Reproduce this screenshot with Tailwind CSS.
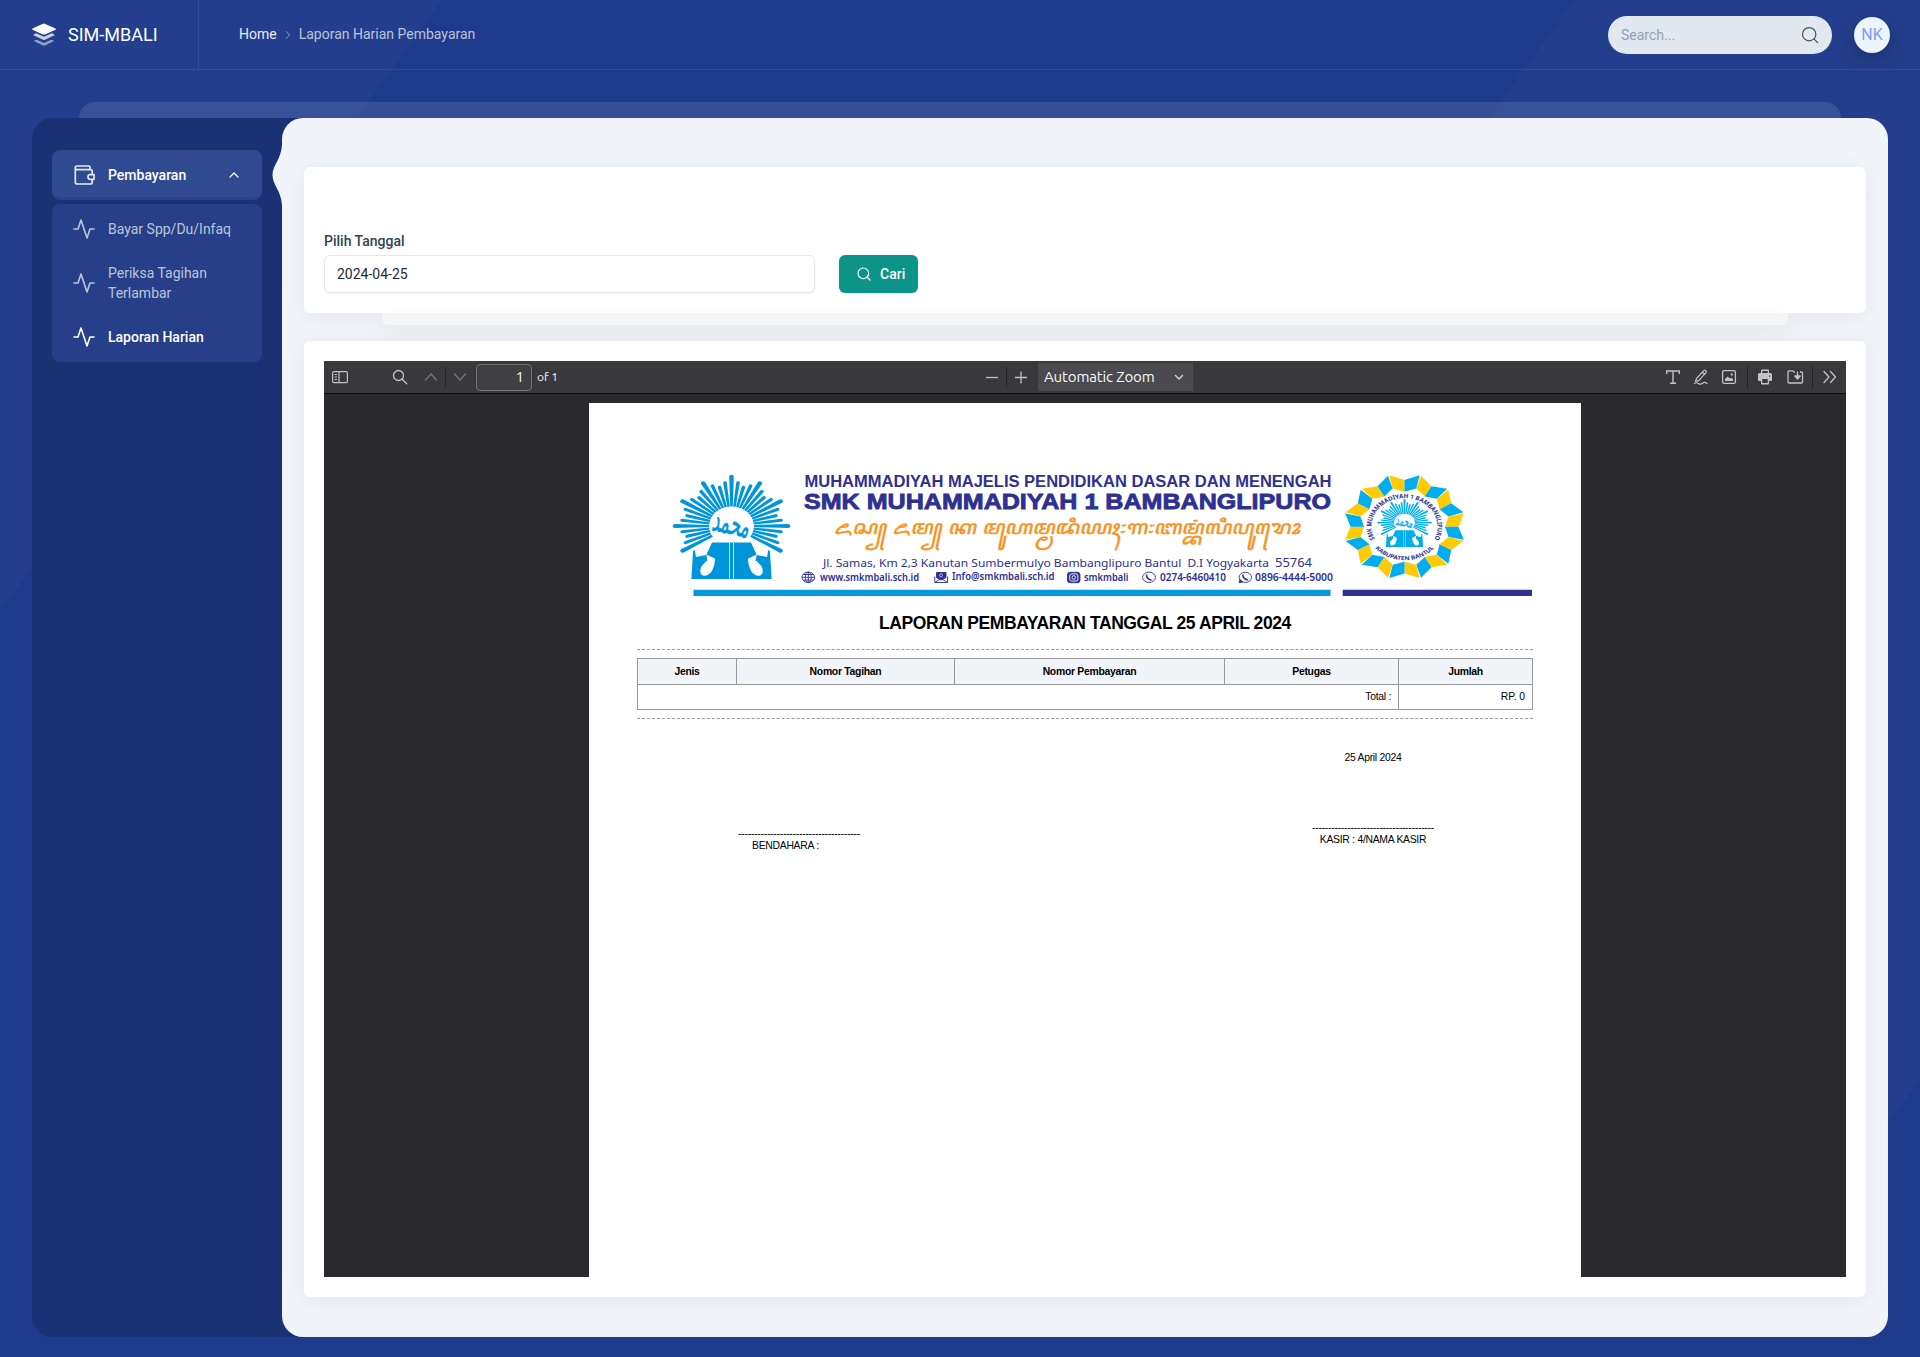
<!DOCTYPE html>
<html lang="id">
<head>
<meta charset="utf-8">
<title>SIM-MBALI</title>
<script src="https://cdn.jsdelivr.net/npm/@tailwindcss/browser@4"></script>
</head>
<body class="relative h-[1357px] w-[1920px] overflow-hidden bg-[#1e3a8a] font-[Roboto,sans-serif] text-sm text-slate-800">
<svg class="absolute inset-0" width="1920" height="1357" aria-hidden="true">
  <path d="M0 0H442L0 612Z" fill="#fff" fill-opacity=".025"/>
  <path d="M1574 0H1920V1080L1870 1148L1400 242Z" fill="#fff" fill-opacity=".025"/>
</svg>

<div class="relative flex h-full flex-col">
  <header class="flex h-[70px] items-center border-b border-white/8 pr-[30px]">
    <div class="flex h-full w-[199px] items-center border-r border-white/8 pl-8">
      <svg width="24" height="24" viewBox="0 0 24 24" fill="#fff">
        <path d="M12 0.5 23.4 5.6Q24.4 6.2 23.4 6.8L13 11.4Q12 11.8 11 11.4L.6 6.8Q-.4 6.2 .6 5.6L11 .8Z"/>
        <path opacity=".75" d="M1.8 11.2 4.3 10.2 11 13.3Q12 13.7 13 13.3L19.7 10.2 22.2 11.2Q23 11.9 22 12.5L13 16.7Q12 17.1 11 16.7L2 12.5Q1 11.9 1.8 11.2Z"/>
        <path opacity=".5" d="M2.6 17.2 4.9 16.7 11 19.6Q12 20 13 19.6L19.1 16.7 21.4 17.2Q22.2 18 21.2 18.6L13 22.6Q12 23 11 22.6L2.8 18.6Q1.8 18 2.6 17.2Z"/>
      </svg>
      <span class="ml-3 text-lg text-white">SIM-MBALI</span>
    </div>
    <nav class="mb-[2px] ml-10 flex items-center text-white/90">
      <span>Home</span>
      <svg class="ml-1 mr-1 mt-[3px]" width="14" height="14" viewBox="0 0 24 24" fill="none" stroke="#fff" stroke-opacity=".6" stroke-width="1.5" stroke-linecap="round" stroke-linejoin="round"><path d="m9 18 6-6-6-6"/></svg>
      <span class="text-white/70">Laporan Harian Pembayaran</span>
    </nav>
    <div class="ml-auto flex h-[38px] w-56 items-center justify-between rounded-full bg-slate-200 pl-[13px] pr-3 text-slate-400">
      <span>Search...</span>
      <svg width="20" height="20" viewBox="0 0 24 24" fill="none" stroke="#475569" stroke-width="1.5" stroke-linecap="round" stroke-linejoin="round"><circle cx="11" cy="11" r="8"/><path d="m21 21-4.3-4.3"/></svg>
    </div>
    <div class="ml-[22px] flex size-9 items-center justify-center rounded-full bg-[#ebf4ff] text-base text-[#7f9cf5] shadow-[0_8px_20px_#00000033]">NK</div>
  </header>

  <div class="mx-[79px] mt-8 h-4 rounded-t-[20px] bg-white/10"></div>

  <main class="mx-8 flex h-[1219px] rounded-[21px] bg-[#1a3174]">
    <aside class="w-[250px] px-5 pt-8">
      <div class="flex h-[50px] items-center overflow-hidden rounded-lg border-b-[3px] border-[#2a4289] bg-[#304a92] pl-5 pr-5 pt-[3px] font-medium text-white">
        <svg width="24" height="24" viewBox="0 0 24 24" fill="none" stroke="#e2e8f0" stroke-width="1.7" stroke-linecap="round" stroke-linejoin="round"><path d="M18 6.500V4.200Q18 3 16.800 3H5Q3.300 3 3.300 4.900T5 6.700H18.500Q20.200 6.700 20.200 8.400V11M3.300 5V19Q3.300 21 5.300 21H18.500Q20.200 21 20.200 19.300V17"/><path d="M22 11.700H18.200Q16 11.700 16 14T18.200 16.300H22Z"/></svg>
        <span class="ml-3">Pembayaran</span>
        <svg class="ml-auto" width="16" height="16" viewBox="0 0 24 24" fill="none" stroke="#fff" stroke-width="1.8" stroke-linecap="round" stroke-linejoin="round"><path d="m18 15-6-6-6 6"/></svg>
      </div>
      <ul class="mt-1 rounded-lg bg-[#263f88] text-white/70">
        <li class="flex h-[50px] items-center pl-5">
          <svg width="24" height="24" viewBox="0 0 24 24" fill="none" stroke="currentColor" stroke-width="1.6" stroke-linecap="round" stroke-linejoin="round"><path d="M22 12h-4l-3 9L9 3l-3 9H2"/></svg>
          <span class="ml-3">Bayar Spp/Du/Infaq</span>
        </li>
        <li class="flex h-[58px] items-center pl-5">
          <svg width="24" height="24" viewBox="0 0 24 24" fill="none" stroke="currentColor" stroke-width="1.6" stroke-linecap="round" stroke-linejoin="round"><path d="M22 12h-4l-3 9L9 3l-3 9H2"/></svg>
          <span class="ml-3">Periksa Tagihan<br>Terlambar</span>
        </li>
        <li class="flex h-[50px] items-center pl-5 font-medium text-white">
          <svg width="24" height="24" viewBox="0 0 24 24" fill="none" stroke="currentColor" stroke-width="1.6" stroke-linecap="round" stroke-linejoin="round"><path d="M22 12h-4l-3 9L9 3l-3 9H2"/></svg>
          <span class="ml-3">Laporan Harian</span>
        </li>
      </ul>
    </aside>

    <section class="relative flex-1 rounded-[21px] bg-slate-100 px-[22px] pt-[49px]">
      <svg class="absolute -left-[10px] top-[27px]" width="11" height="60" viewBox="0 0 11 60" fill="#f1f5f9"><path d="M11 0H10C9 15 .5 20 .5 30S9 45 10 60H11Z"/></svg>

      <div class="relative h-[146px] rounded-md bg-white px-5 pt-16 shadow-[0_3px_22px_#00000010]">
        <div class="absolute left-[78px] right-[78px] top-full h-3 rounded-b-md bg-[#f4f5f6] shadow-[0_6px_20px_#00000010]"></div>
        <label class="block font-medium text-slate-700">Pilih Tanggal</label>
        <div class="mt-1 flex">
          <div class="flex h-[38px] w-[491px] items-center rounded-md border border-slate-200 px-3 shadow-xs">2024-04-25</div>
          <button class="ml-6 flex h-[38px] w-[79px] items-center rounded-md bg-[#0d9488] pl-[17px] font-medium text-white shadow-xs">
            <svg width="16" height="16" viewBox="0 0 24 24" fill="none" stroke="currentColor" stroke-width="1.8" stroke-linecap="round" stroke-linejoin="round"><circle cx="11" cy="11" r="8"/><path d="m21 21-4.3-4.3"/></svg>
            <span class="ml-2">Cari</span>
          </button>
        </div>
      </div>

      <div class="relative mt-7 h-[956px] rounded-md bg-white p-5 shadow-[0_3px_22px_#00000010]">
        <div class="flex h-[916px] flex-col bg-[#2a2a2e]">
          <div class="flex h-[33px] shrink-0 items-center border-b border-[#0c0c0d] bg-[#38383d] font-[Ubuntu,'Noto_Sans',sans-serif] text-[15px] text-[#f9f9fa]">
            <svg class="ml-2" width="16" height="16" viewBox="0 0 16 16" fill="none" stroke="#c3c3c5" stroke-width="1.2"><rect x=".6" y="2.6" width="14.8" height="11" rx="1.2"/><path d="M7 2.6v11M2.5 5.5H5M2.5 8H5M2.5 10.500H5"/></svg>
            <svg class="ml-11" width="16" height="16" viewBox="0 0 16 16" fill="none" stroke="#c3c3c5" stroke-width="1.3" stroke-linecap="round"><circle cx="6.5" cy="6.500" r="5"/><path d="m10.200 10.200 4.500 4.500"/></svg>
            <svg class="ml-[15px]" width="16" height="16" viewBox="0 0 16 16" fill="none" stroke="#76767a" stroke-width="1.3" stroke-linecap="round"><path d="m2.500 11 5.500-6 5.500 6"/></svg>
            <div class="ml-[6px] h-5 w-px bg-[#232327]"></div>
            <svg class="ml-[6px]" width="16" height="16" viewBox="0 0 16 16" fill="none" stroke="#76767a" stroke-width="1.3" stroke-linecap="round"><path d="m2.500 5 5.500 6 5.500-6"/></svg>
            <div class="ml-2 flex h-[27px] w-14 items-center justify-end rounded-sm border border-[#737373] bg-[#404044] pr-[7px]">1</div>
            <span class="ml-[5px] w-6 whitespace-nowrap text-[12px]">of 1</span>
            <svg class="ml-[423px]" width="16" height="16" viewBox="0 0 16 16" stroke="#c3c3c5" stroke-width="1.300"><path d="M2 8.500h12"/></svg>
            <div class="ml-[6px] h-5 w-px bg-[#232327]"></div>
            <svg class="ml-[6px]" width="16" height="16" viewBox="0 0 16 16" stroke="#c3c3c5" stroke-width="1.300"><path d="M2 8.500h12M8 2.500v12"/></svg>
            <div class="ml-[9px] flex h-7 w-[155px] items-center justify-between bg-[#4a4a4f] pl-[6px] pr-[7px] tracking-[-0.14px]">
              <span class="whitespace-nowrap">Automatic Zoom</span>
              <svg width="14" height="14" viewBox="0 0 14 14" fill="none" stroke="#dcdcde" stroke-width="1.300" stroke-linecap="round"><path d="m3.500 5.500 3.500 3.500 3.500-3.500"/></svg>
            </div>
            <div class="ml-auto flex items-center">
              <svg width="16" height="16" viewBox="0 0 16 16" fill="none" stroke="#c3c3c5" stroke-width="1.400"><path d="M1.700 5V2h12.600v3M8 2v12.300M5 14.300h6"/></svg>
              <svg class="ml-3" width="16" height="16" viewBox="0 0 16 16" fill="none" stroke="#c3c3c5" stroke-width="1.200" stroke-linejoin="round" stroke-linecap="round"><path d="M3.500 9.500 10.800 1.600q1-.8 2 .1t.2 2L5.700 11.700 2.500 12.500zM9.500 3.200l2.200 2.100M1.500 14.500q2-1.500 4 0t4-.2 4.500.1"/></svg>
              <svg class="ml-3" width="16" height="16" viewBox="0 0 16 16" fill="#c3c3c5"><rect x="1.600" y="1.600" width="12.800" height="12.800" rx="1.500" fill="none" stroke="#c3c3c5" stroke-width="1.300"/><path d="M4 12V10l2.500-2.500L9 9.500l1.200-.9L12 10.300V12zM9.800 4.500h2v2h-2z"/></svg>
              <div class="ml-[10px] h-[22px] w-px bg-[#232327]"></div>
              <svg class="ml-[9px]" width="16" height="16" viewBox="0 0 16 16" fill="#c3c3c5"><path fill-rule="evenodd" d="M4 1.500Q4 .500 5 .500h6q1 0 1 1V4h1.500q1.500 0 1.500 1.500V11q0 1-1 1h-2v2.500q0 1-1 1H5q-1 0-1-1V12H2q-1 0-1-1V5.500Q1 4 2.500 4H4zM5.300 2v2h5.400V2zM5.300 10v4h5.400v-4zM12 6.500v1.200h1.200V6.500z"/></svg>
              <svg class="ml-[14px]" width="17" height="16" viewBox="0 0 17 16" fill="none" stroke="#c3c3c5" stroke-width="1.300" stroke-linejoin="round"><path d="M8 3H7L5.500 1.800H2q-1 0-1 1V13q0 1 1 1h12.500q1 0 1-1V4q0-1-1-1H13"/><path d="M10.500 2.500v7M7.800 7l2.700 3 2.700-3z" fill="#c3c3c5"/></svg>
              <div class="ml-2 h-[22px] w-px bg-[#232327]"></div>
              <svg class="ml-[9px] mr-2" width="16" height="16" viewBox="0 0 16 16" fill="none" stroke="#c3c3c5" stroke-width="1.300" stroke-linecap="round" stroke-linejoin="round"><path d="m2 2.500 5 5.500-5 5.500M8.500 2.500l5 5.500-5 5.500"/></svg>
            </div>
          </div>

          <article class="mx-auto mt-[9px] flex w-[992px] flex-1 flex-col bg-white px-12 font-['Liberation_Sans',sans-serif] text-[10.400px] leading-3 tracking-[-0.28px] text-black">
            <svg class="-mx-12 shrink-0 tracking-normal" width="992" height="200" viewBox="589 403 992 200">
              <defs>
                <g id="sun">
                  <g id="rays" fill="currentColor"></g>
                  <circle r="19.500" fill="#fff"/>
                  <path fill="currentColor" d="M-35 53-33.500 25-32 24-31 31-22 29-17 16.500H17L22 29 31 31 32 24 33.500 25 35 53Z"/>
                  <path fill="#fff" d="M-31 34.500-22 35-26 40Q-29 47-25 49.500-21 51-17 45-14 38-14.500 32.500L-22 28.500-21 35ZM31 34.500 22 35 26 40Q29 47 25 49.500 21 51 17 45 14 38 14.500 32.500L22 28.500 21 35ZM-2 17h.7v35.500H-2zM1.300 17H2v35.500H1.300z"/>
                  <text x="0" y="4" transform="rotate(14) scale(1 2)" text-anchor="middle" font-family="DejaVu Sans, sans-serif" font-size="16" fill="currentColor" stroke="currentColor" stroke-width=".3" textLength="33" lengthAdjust="spacingAndGlyphs">محمد</text>
                </g>
                <path id="arcTop" d="M-25.600 12.500A28.500 28.500 0 1 1 25.600 12.500"/>
                <path id="arcBottom" d="M-27.500 19A33.400 33.400 0 0 0 27.500 19"/>
              </defs>
              <use href="#sun" color="#0095da" transform="translate(731.500 526) scale(1.147 1)"/>
              <g fill="#2e3092" font-family="Liberation Sans, sans-serif" font-weight="bold">
                <text x="804.500" y="487" font-size="15.600" textLength="527" lengthAdjust="spacingAndGlyphs">MUHAMMADIYAH MAJELIS PENDIDIKAN DASAR DAN MENENGAH</text>
                <text x="804" y="509.300" font-size="21.500" stroke="#2e3092" stroke-width=".8" textLength="527" lengthAdjust="spacingAndGlyphs">SMK MUHAMMADIYAH 1 BAMBANGLIPURO</text>
              </g>
              <text transform="translate(834 534) skewX(-12)" font-size="19.500" fill="#f7931e" stroke="#f7931e" stroke-width=".35" font-family="Noto Sans Javanese, Noto Sans, sans-serif" textLength="466" lengthAdjust="spacingAndGlyphs">ꦌꦱ꧀ ꦌꦩ꧀ ꦏ ꦩꦸꦲꦩ꧀ꦩꦢꦶꦪꦃ꧇꧑꧇ꦧꦩ꧀ꦧꦁꦭꦶꦥꦸꦫꦺꦴ</text>
              <g fill="#2e3092" font-family="Noto Sans, sans-serif">
                <text x="823" y="567" font-size="11.500" textLength="446" lengthAdjust="spacingAndGlyphs">Jl. Samas, Km 2,3 Kanutan Sumbermulyo Bambanglipuro Bantul&#160; D.I Yogyakarta</text>
                <text x="1275" y="567" font-size="12.300" textLength="37" lengthAdjust="spacingAndGlyphs">55764</text>
                <g font-size="9.800" font-weight="600">
                  <text x="820" y="580.500" textLength="99" lengthAdjust="spacingAndGlyphs">www.smkmbali.sch.id</text>
                  <text x="952" y="580" textLength="102.500" lengthAdjust="spacingAndGlyphs">Info@smkmbali.sch.id</text>
                  <text x="1084" y="580.500" textLength="44.500" lengthAdjust="spacingAndGlyphs">smkmbali</text>
                  <text x="1160" y="580.500" textLength="66" lengthAdjust="spacingAndGlyphs">0274-6460410</text>
                  <text x="1255" y="580.500" textLength="78" lengthAdjust="spacingAndGlyphs">0896-4444-5000</text>
                </g>
              </g>
              <g fill="none" stroke="#2e3092" stroke-width=".9">
                <ellipse cx="808.300" cy="577.300" rx="6.400" ry="5.200"/><ellipse cx="808.300" cy="577.300" rx="3" ry="5.200"/><path d="M808.300 572v10.500M802 577.300h12.700M803 574.500h10.600M803 580h10.600"/>
                <path fill="#2e3092" d="M936.500 572.500h9.500v5l-5 2.500-4.500-2.500z"/><path d="M934.800 576.500V582.500H947.500V576.500M934.800 582.500 941 578.500 947.500 582.500"/><circle cx="941" cy="575.300" r="1.500" stroke="#fff" stroke-width=".6"/>
                <rect x="1067.500" y="572.300" width="12.500" height="10.400" rx="2.500" fill="#2e3092"/><rect x="1069.700" y="573.900" width="8.200" height="7.200" rx="2" stroke="#fff"/><circle cx="1073.800" cy="577.500" r="1.800" stroke="#fff"/>
                <ellipse cx="1149" cy="577.300" rx="6.400" ry="5.200"/><path stroke-width="1.600" d="M1146.500 574.500Q1146.300 578.800 1151.500 580.300"/>
                <ellipse cx="1245.300" cy="577.300" rx="6.200" ry="5.100"/><path stroke-width="1.600" d="M1242.800 574.500Q1242.800 578.800 1247.800 580"/><path fill="#2e3092" d="M1239 582.700 1240 579.500 1242.500 582z"/>
              </g>
              <path fill="#0098df" d="M693.500 589.700h637v6.300h-637z"/>
              <path fill="#2e3092" d="M1342.700 589.700H1532v6.300h-189.300z"/>
              <g transform="translate(1404.500 526.700) scale(1.155 1)">
                <g id="wreath"></g>
                <g fill="#2e3092" font-family="Noto Sans, sans-serif" font-weight="bold" font-size="6">
                  <text textLength="115" lengthAdjust="spacingAndGlyphs"><textPath href="#arcTop" textLength="115" lengthAdjust="spacingAndGlyphs">SMK MUHAMMADIYAH 1 BAMBANGLIPURO</textPath></text>
                  <text font-size="5.500"><textPath href="#arcBottom" startOffset="50%" text-anchor="middle" textLength="58" lengthAdjust="spacingAndGlyphs">KABUPATEN BANTUL</textPath></text>
                </g>
                <use href="#sun" color="#00aeef" transform="translate(0 -4) scale(.46)"/>
              </g>
            </svg>

            <h1 class="mt-[10px] text-center text-[17.500px] font-bold leading-5 tracking-[-0.4px]">LAPORAN PEMBAYARAN TANGGAL 25 APRIL 2024</h1>
            <div class="mt-[16px] border-t border-dashed border-[#999]"></div>
            <table class="mt-2 w-[895px] table-fixed border-collapse text-right">
              <colgroup><col class="w-[99px]"><col class="w-[218px]"><col class="w-[270px]"><col class="w-[174px]"><col class="w-[134px]"></colgroup>
              <tr class="h-[26px] bg-[#f1f5f9] text-center">
                <th class="border border-[#999]">Jenis</th><th class="border border-[#999]">Nomor Tagihan</th><th class="border border-[#999]">Nomor Pembayaran</th><th class="border border-[#999]">Petugas</th><th class="border border-[#999]">Jumlah</th>
              </tr>
              <tr class="h-[25px]"><td colspan="4" class="border border-[#999] pr-[7px]">Total :</td><td class="border border-[#999] pr-[7px] tracking-[-0.1px]">RP. 0</td></tr>
            </table>
            <div class="mt-2 border-t border-dashed border-[#999]"></div>
            <div class="flex justify-between pl-[101px] pr-[99px]">
              <div class="pt-[109px] leading-[11px]">
                <div class="tracking-[-0.250px]">--------------------------------------</div>
                <div class="pl-[14px] pt-px">BENDAHARA :</div>
              </div>
              <div class="pt-[33px] text-center leading-[11px]">
                <div>25 April 2024</div>
                <div class="mt-[59px] tracking-[-0.250px]">--------------------------------------</div>
                <div class="pt-px">KASIR : 4/NAMA KASIR</div>
              </div>
            </div>
          </article>
        </div>
      </div>
    </section>
  </main>
</div>

<script>
  const NS = 'http://www.w3.org/2000/svg';
  const make = (parent, tag, attrs) => {
    const el = document.createElementNS(NS, tag);
    for (const k in attrs) el.setAttribute(k, attrs[k]);
    parent.appendChild(el);
  };
  // 48 rays that widen outwards and end round: every fourth is the longest
  const rays = document.getElementById('rays');
  for (let i = 0; i < 48; i++) {
    const deg = i * 7.5, len = [49.300, 43.500, 40, 43.500][i % 4], w = i % 4 ? 1.550 : 2;
    if (deg > 127 && deg < 233) continue;
    make(rays, 'path', { d: `M-1.1 -19L${-w} ${-len}A${w} ${w} 0 0 1 ${w} ${-len}L1.1 -19Z`, transform: `rotate(${deg})` });
  }
  // ring of 12 pairs of rhombi
  const wreath = document.getElementById('wreath');
  const pt = (r, deg) => `${r * Math.sin(deg * Math.PI / 180)},${-r * Math.cos(deg * Math.PI / 180)}`;
  for (let i = 0; i < 12; i++) {
    const d = i * 30;
    for (const [side, fill] of [[-1, '#ffcb05'], [1, '#00aeef']]) {
      make(wreath, 'polygon', { points: [pt(46.700, d), pt(53, d + side * 14.300), pt(39.500, d + side * 15), pt(35, d)].join(' '), fill });
    }
  }
</script>
</body>
</html>
